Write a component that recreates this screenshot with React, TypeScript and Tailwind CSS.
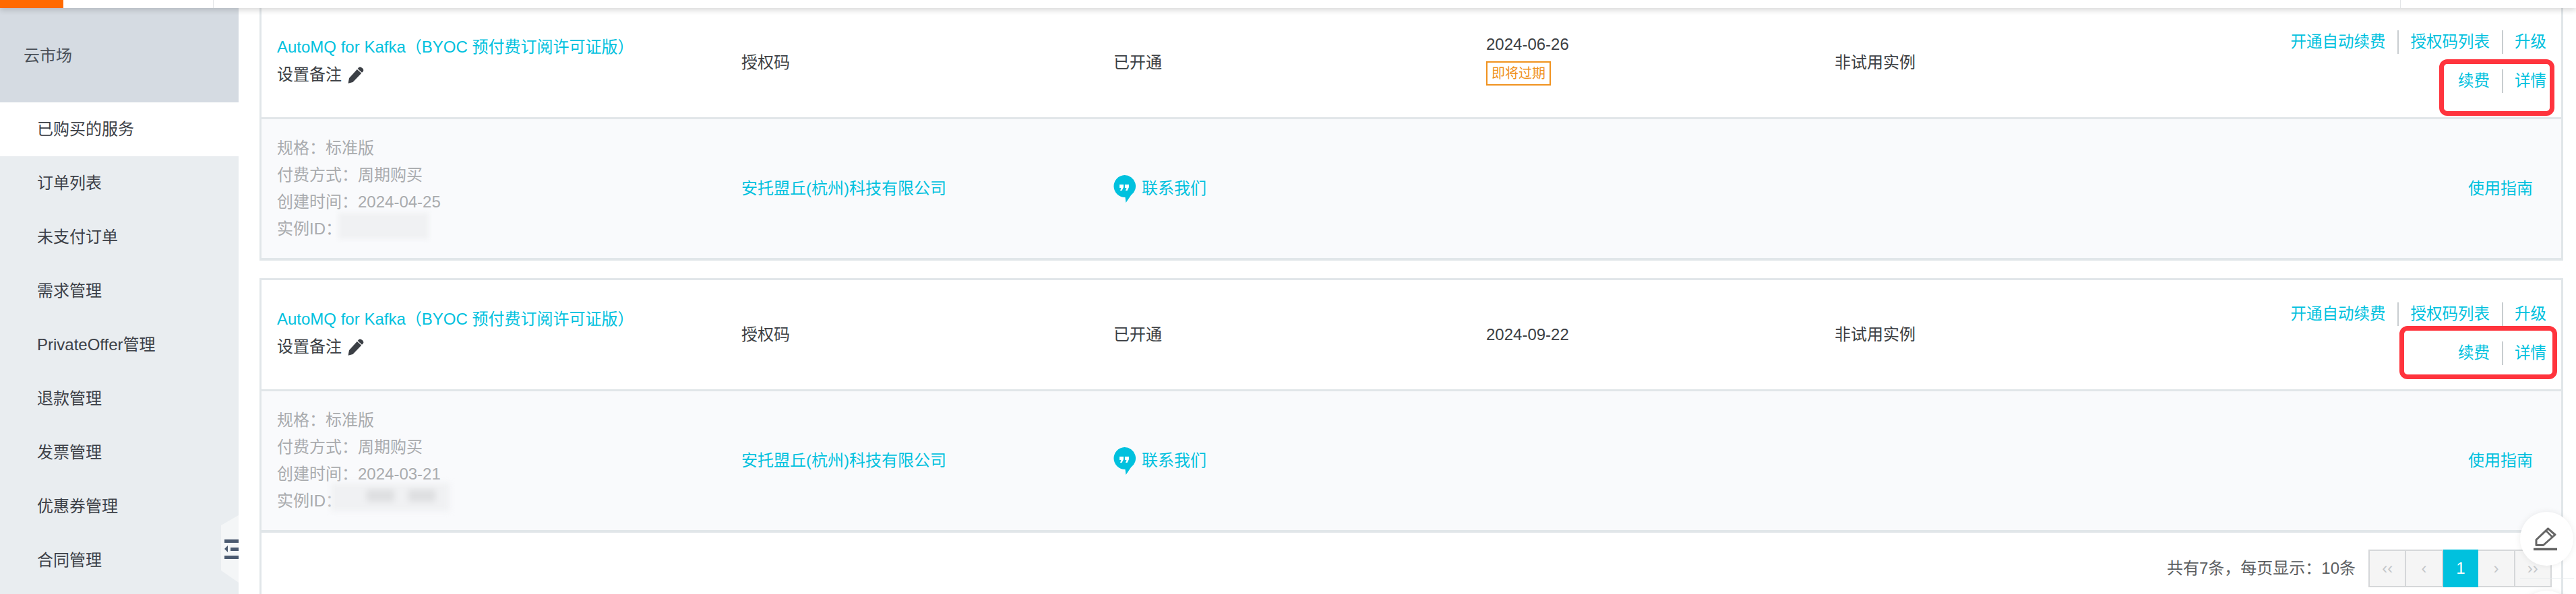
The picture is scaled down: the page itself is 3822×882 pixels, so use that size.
import React from 'react';

const menu = ['已购买的服务', '订单列表', '未支付订单', '需求管理', 'PrivateOffer管理', '退款管理', '发票管理', '优惠券管理', '合同管理'];

const PencilIcon = () => (
  <svg viewBox="0 0 24 25" className="w-[24px] h-[25px] fill-[#3b3f45]">
    <path d="M16 1.5 C17.5 0 19.5 0.3 21.5 2 C23.5 3.8 23.8 5.8 22.5 7.2 L21 8.8 L14.6 3 Z" />
    <path d="M13.8 4 L20.2 9.8 L7.5 23 L0.6 24.8 L2 17 Z" />
  </svg>
);

const ChatIcon = () => (
  <svg viewBox="0 0 33 41" className="w-[33px] h-[41px]">
    <path d="M16.5 0 A16.5 16.5 0 0 1 26 30 L18.5 41 L17.5 33 A16.5 16.5 0 0 1 16.5 0 Z" fill="#00c1de" />
    <path d="M9 14 h6 v4 L12.5 23 h-2.5 L11.5 19 H9 Z M17 14 h6 v4 L20.5 23 h-2.5 L19.5 19 H17 Z" fill="#fff" />
  </svg>
);

const EraserIcon = () => (
  <svg viewBox="0 0 36 35" className="w-[36px] h-[35px] fill-none stroke-[#666]">
    <path d="M4 18.5 L21.5 1.8 L32 11 L14.5 26.5 H4 Z" strokeWidth="3" strokeLinejoin="round" />
    <path d="M18.5 5 L27.5 14" strokeWidth="2.5" />
    <path d="M0 32.5 H35" strokeWidth="3.5" />
  </svg>
);

const Sep = () => <span className="mx-[17.5px] h-[35px] w-[2px] bg-[#c8cdd0]" />;

type Plan = {
  date: string;
  created: string;
  expiring?: boolean;
  first?: boolean;
};

const Card = ({ date, created, expiring, first }: Plan) => (
  <div className={first ? '-mt-[3px] border-x-[3px] border-b-[4px] border-t-[3px] border-[#e1e6e9]' : 'mt-[26px] border-x-[3px] border-b-[4px] border-t-[3px] border-[#e1e6e9]'}>
    <div className="relative grid h-[162px] grid-cols-[712px_552px_553px_517px_1fr] items-center text-[#3c3f44]">
      <div className="pb-[7px] pl-[23px]">
        <div className="leading-[40px] text-[#00c1de]">AutoMQ for Kafka（BYOC 预付费订阅许可证版）</div>
        <div className="mt-[3px] flex items-center gap-[9px] leading-[36px]">
          设置备注 <PencilIcon />
        </div>
      </div>
      <div>授权码</div>
      <div>已开通</div>
      <div className={expiring ? 'pb-[11px]' : ''}>
        <div className="leading-[36px]">{date}</div>
        {expiring && (
          <div className="mt-[7px] w-fit border-2 border-[#f0921e] px-[6px] text-[20px] leading-[32px] text-[#f0921e]">即将过期</div>
        )}
      </div>
      <div>非试用实例</div>
      <div className="absolute right-[22px] top-[33px] flex flex-col items-end text-[23.5px] text-[#00c1de]">
        <div className="flex h-[35px] items-center">
          开通自动续费<Sep />授权码列表<Sep />升级
        </div>
        <div className="mt-[23px] flex h-[35px] items-center">
          续费<Sep />详情
        </div>
      </div>
      {first ? (
        <div className="absolute right-[10px] top-[76px] h-[84px] w-[171px] rounded-[12px] border-[7px] border-[#ff343d]" />
      ) : (
        <div className="absolute right-[6px] top-[68px] h-[79px] w-[234px] rounded-[12px] border-[7px] border-[#ff343d]" />
      )}
    </div>
    <div className="grid h-[209px] grid-cols-[712px_552px_1fr_auto] items-center border-t-[3px] border-[#e1e6e9] bg-[#f9fafc]">
      <div className="pl-[23px] leading-[40px] text-[#a9abae]">
        <div>规格：标准版</div>
        <div>付费方式：周期购买</div>
        <div>创建时间：{created}</div>
        <div className="relative">
          实例ID：
          {first ? (
            <span className="absolute left-[91px] -top-[4px] h-[39px] w-[134px] bg-[#f0f1f3] blur-[3px]" />
          ) : (
            <span className="absolute left-[80px] -top-[7px] h-[42px] w-[176px] bg-[#f0f1f3] blur-[4px]">
              <span className="absolute left-[53px] top-[10px] h-[18px] w-[41px] bg-[#dedfe1]" />
              <span className="absolute left-[115px] top-[10px] h-[18px] w-[40px] bg-[#dedfe1]" />
            </span>
          )}
        </div>
      </div>
      <div className="text-[#00c1de]">安托盟丘(杭州)科技有限公司</div>
      <div className="flex items-center gap-[9px] text-[#00c1de]">
        <ChatIcon /> 联系我们
      </div>
      <div className="pr-[42px] text-[#00c1de]">使用指南</div>
    </div>
  </div>
);

const Pager = () => (
  <div className="flex h-[56px] w-[272px] border-2 border-[#d5d7d9] text-[#c3c6c9]">
    <div className="flex flex-1 items-center justify-center border-r-2 border-[#d5d7d9] bg-[#f5f5f5]">‹‹</div>
    <div className="flex flex-1 items-center justify-center border-r-2 border-[#d5d7d9] bg-[#f5f5f5]">‹</div>
    <div className="-my-[2px] flex flex-1 items-center justify-center bg-[#00c1de] text-white">1</div>
    <div className="flex flex-1 items-center justify-center border-r-2 border-[#d5d7d9] bg-[#f5f5f5]">›</div>
    <div className="flex flex-1 items-center justify-center bg-[#f5f5f5]">››</div>
  </div>
);

export default function App() {
  return (
    <div className="relative flex h-[882px] w-[3822px] flex-col overflow-hidden bg-white text-[24px] font-['Liberation_Sans','Noto_Sans_CJK_SC',sans-serif]">
      {/* top bar, only its lower edge is in view */}
      <header className="relative z-10 flex h-[12px] shrink-0 items-stretch bg-white shadow-[0_3px_8px_rgba(0,0,0,0.16)]">
        <div className="w-[94px] bg-[#ff6a00]" />
        <div className="ml-[222px] w-px bg-[#e3e5e7]" />
        <div className="ml-[3244px] w-px bg-[#e3e5e7]" />
      </header>

      <div className="flex min-h-0 flex-1">
        <aside className="relative w-[354px] shrink-0 bg-[#e9edf0] text-[#3c4047]">
          <div className="flex h-[140px] items-center bg-[#d5dbe2] pl-[35px] pt-[2px] text-[#4a5058]">云市场</div>
          {menu.map((item, i) => (
            <div key={item} className={i === 0 ? 'flex h-[80px] items-center bg-white pl-[55px]' : 'flex h-[80px] items-center pl-[55px]'}>
              {item}
            </div>
          ))}
          <div className="absolute bottom-[17px] right-0 flex h-[100px] w-[26px] flex-col items-end justify-center gap-[7px] bg-[#f4f6f7] [clip-path:polygon(100%_0,100%_100%,0_82%,0_15%)]">
            <span className="h-[5px] w-[21px] bg-[#4b5a70]" />
            <span className="flex h-[5px] w-[21px] items-center justify-between">
              <span className="h-[10px] w-[5px] bg-[#4b5a70] [clip-path:polygon(100%_0,100%_100%,0_50%)]" />
              <span className="h-[5px] w-[12px] bg-[#4b5a70]" />
            </span>
            <span className="h-[5px] w-[21px] bg-[#4b5a70]" />
          </div>
        </aside>

        <main className="ml-[31px] mr-[19px] flex min-w-0 flex-1 flex-col">
          <Card first expiring date="2024-06-26" created="2024-04-25" />
          <Card date="2024-09-22" created="2024-03-21" />
          <div className="flex flex-1 items-start justify-end border-x-[3px] border-[#e1e6e9] pr-[14px] pt-[25px]">
            <div className="mr-[19px] flex h-[56px] items-center text-[#5a5d60]">共有7条，每页显示：10条</div>
            <Pager />
          </div>
        </main>
      </div>

      {/* floating buttons over the page corner */}
      <div className="absolute left-[3739px] top-[859px] h-px w-[80px] bg-[#e6eaec]" />
      <div className="absolute left-[3739px] top-[760px] flex h-[80px] w-[79px] items-center justify-center rounded-full bg-white pr-[4px] shadow-[0_0_10px_rgba(0,0,0,0.08)]">
        <EraserIcon />
      </div>
      <div className="absolute left-[3739px] top-[877px] h-[80px] w-[79px] rounded-full bg-white shadow-[0_0_10px_rgba(0,0,0,0.08)]" />
    </div>
  );
}
